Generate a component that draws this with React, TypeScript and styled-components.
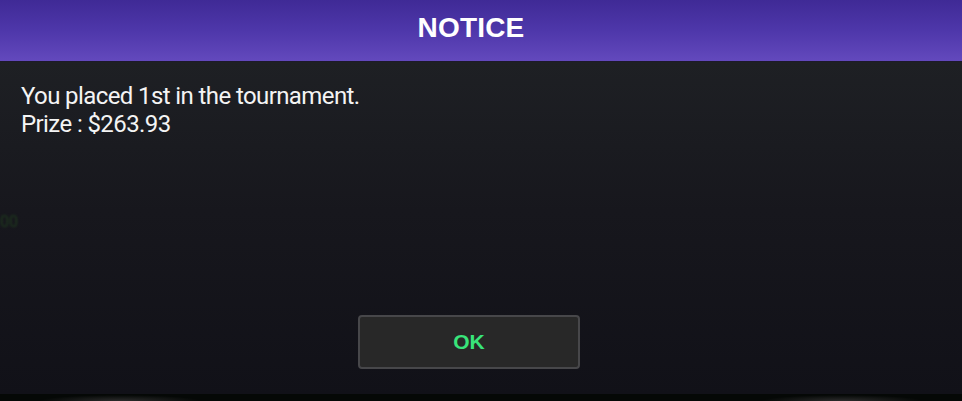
import React from 'react';
import styled, { createGlobalStyle } from 'styled-components';

const GlobalStyle = createGlobalStyle`
  html, body {
    margin: 0;
    padding: 0;
    background: #070908;
  }
  #root {
    width: 962px;
    height: 401px;
    overflow: hidden;
  }
`;

export default function App() {
  return (
    <>
      <GlobalStyle />
      <Screen>
        <Dialog>
          <Header>
            <Title>NOTICE</Title>
          </Header>
          <Body>
            <BehindText>00</BehindText>
            <Message>
              You placed 1st in the tournament.
              <br />
              Prize : $263.93
            </Message>
            <Footer>
              <OkButton>OK</OkButton>
            </Footer>
          </Body>
        </Dialog>
        <TableEdge />
      </Screen>
    </>
  );
}

const Screen = styled.div`
  display: flex;
  flex-direction: column;
  width: 962px;
  height: 401px;
`;

const Dialog = styled.section`
  display: flex;
  flex-direction: column;
  height: 394px;
  box-shadow: 0 1px 0 #1b1a22;
`;

const Header = styled.header`
  height: 61px;
  flex: none;
  display: flex;
  align-items: center;
  justify-content: center;
  padding-right: 20px;
  background: linear-gradient(180deg, #3f2a96 0%, #4e37aa 50%, #6349bd 100%);
  border-bottom: 1px solid #1d1a2a;
`;

const Title = styled.h1`
  margin: 0;
  padding-bottom: 6px;
  font-family: 'Liberation Sans', Arial, sans-serif;
  font-weight: 700;
  font-size: 28px;
  color: #ffffff;
  letter-spacing: 0.2px;
`;

const Body = styled.div`
  position: relative;
  flex: 1;
  display: flex;
  flex-direction: column;
  background: linear-gradient(180deg, #1e2024 0%, #17171d 45%, #111118 100%);
`;

const BehindText = styled.span`
  position: absolute;
  left: 0;
  top: 150px;
  font-family: Roboto, sans-serif;
  font-size: 16px;
  color: #1f3a1e;
  filter: blur(0.8px);
`;

const Message = styled.p`
  margin: 0;
  padding: 20px 21px 0;
  font-family: Roboto, 'Noto Sans', sans-serif;
  font-size: 24px;
  line-height: 28px;
  color: #f4f4f4;
  letter-spacing: -0.6px;
`;

const Footer = styled.div`
  margin-top: auto;
  display: flex;
  justify-content: center;
  padding: 0 24px 25px 0;
`;

const OkButton = styled.button`
  width: 222px;
  height: 54px;
  background: #282828;
  border: 2px solid #47474a;
  border-radius: 4px;
  font-family: 'Liberation Sans', Arial, sans-serif;
  font-weight: 700;
  font-size: 21px;
  color: #38e47a;
  cursor: pointer;
`;

const TableEdge = styled.div`
  flex: 1;
  background: radial-gradient(ellipse 80px 6px at 120px 100%, #2c2c2c, transparent),
    radial-gradient(ellipse 80px 6px at 842px 100%, #2c2c2c, transparent),
    #050806;
`;
